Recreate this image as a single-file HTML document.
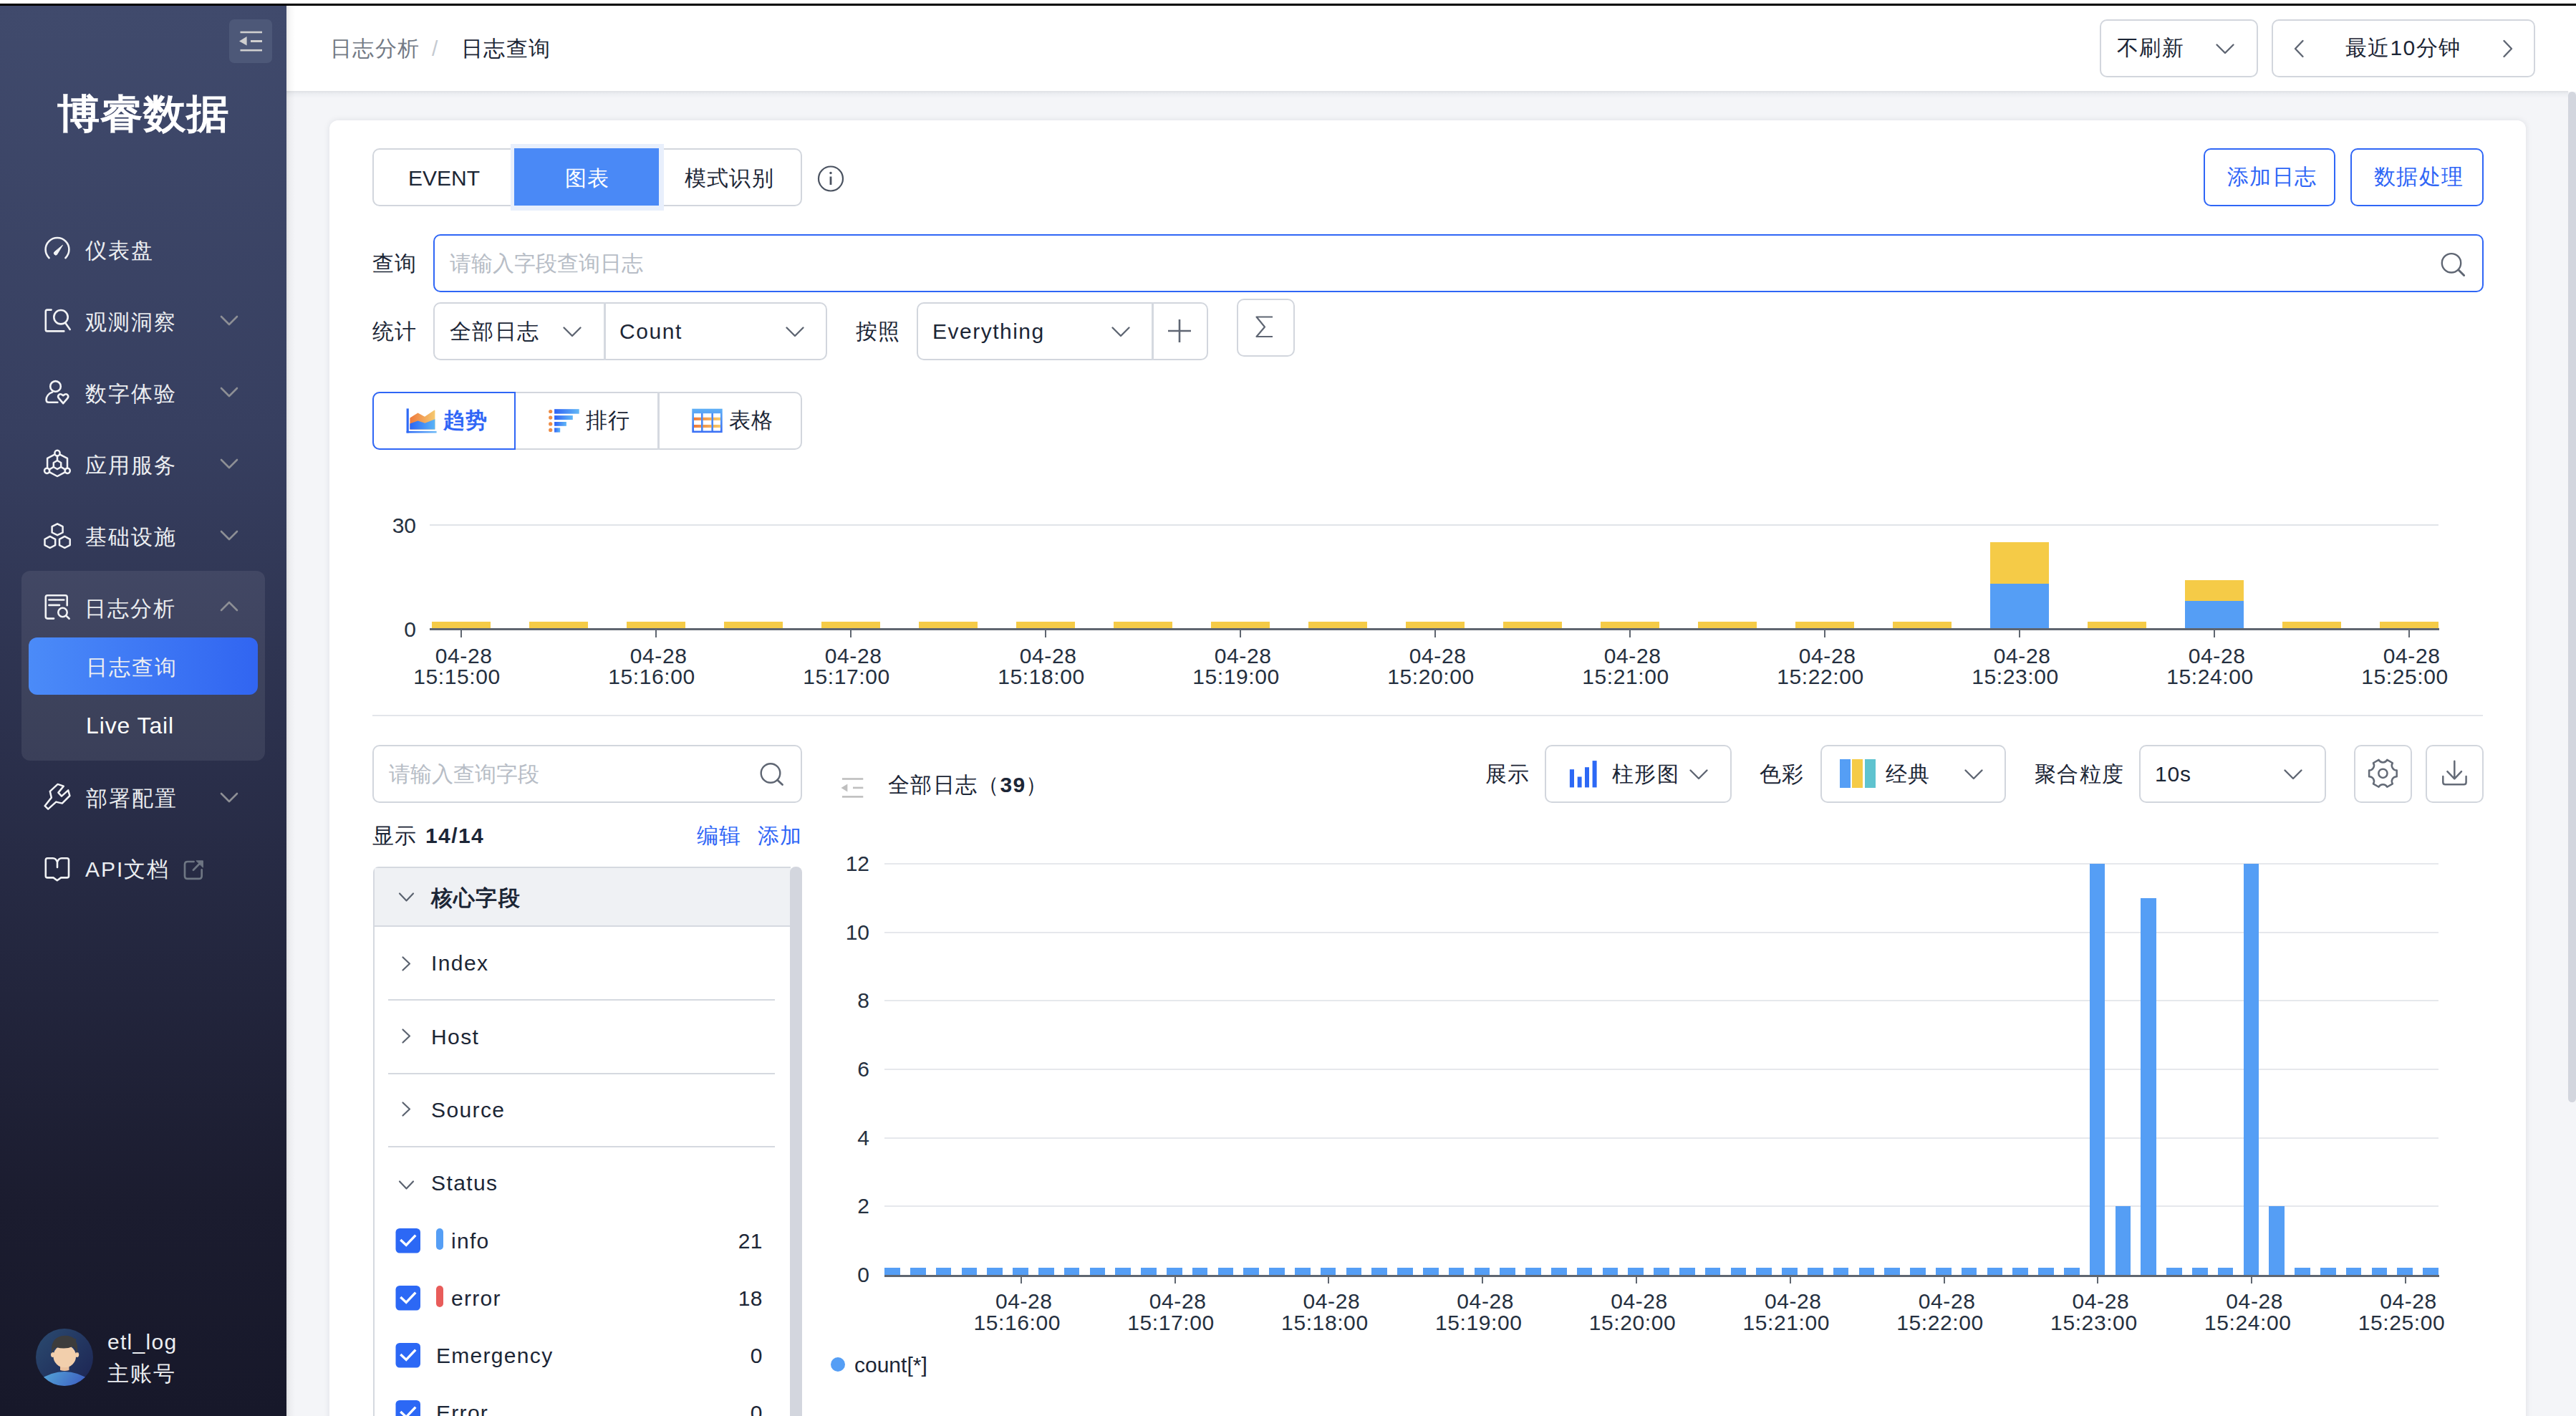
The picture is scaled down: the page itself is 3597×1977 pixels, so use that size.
<!DOCTYPE html>
<html><head><meta charset="utf-8">
<style>
*{box-sizing:border-box;margin:0;padding:0}
html,body{width:3597px;height:1977px;overflow:hidden;background:#f4f5f8;font-family:"Liberation Sans",sans-serif;color:#1c2636}
.a{position:absolute}
.t{position:absolute;white-space:nowrap;line-height:1}
#topw{left:0;top:0;width:3597px;height:5px;background:#fff}
#topb{left:0;top:5px;width:3597px;height:3px;background:#000}
#side{left:0;top:8px;width:400px;height:1969px;background:linear-gradient(180deg,#404a6c 0%,#373f60 30%,#272b45 60%,#1b1c2f 85%,#17182a 100%)}
.mi{color:#eceef1;font-size:30px;letter-spacing:2px}
.chev{position:absolute;width:16px;height:16px;border-right:2.5px solid #8a8f9a;border-bottom:2.5px solid #8a8f9a;transform:rotate(45deg)}
#hdr{left:400px;top:8px;width:3197px;height:120px;background:#fff}
#hshadow{left:400px;top:127px;width:3186px;height:10px;background:linear-gradient(180deg,#dfe1e5,#eceef2 40%,#f4f5f8)}
#lshadow{left:400px;top:8px;width:12px;height:1969px;background:linear-gradient(90deg,rgba(0,0,0,0.09),rgba(0,0,0,0.03) 40%,rgba(0,0,0,0))}
#sb{left:3586px;top:128px;width:11px;height:1411px;background:#d3d6de;border-radius:6px 6px 6px 6px}
#card{left:460px;top:168px;width:3067px;height:1900px;background:#fff;border-radius:12px;box-shadow:0 0 9px rgba(30,40,60,0.10)}
.box{position:absolute;border:2px solid #d2d6dd;border-radius:10px;background:#fff}
.dch{position:absolute;width:15px;height:15px;border-right:2.5px solid #4a5260;border-bottom:2.5px solid #4a5260;transform:rotate(45deg)}
.ax{font-size:30px;color:#253040;text-align:center;line-height:30.5px;position:absolute;white-space:nowrap;letter-spacing:0.6px}
.ax span{display:block}
</style></head><body>
<div id="topw" class="a"></div>
<div id="topb" class="a"></div>

<!-- SIDEBAR -->
<div id="side" class="a"></div>
<div class="a" style="left:320px;top:27px;width:60px;height:61px;background:#4d5878;border-radius:7px"></div>
<svg class="a" style="left:330px;top:38px" width="42" height="40" viewBox="0 0 42 40">
<rect x="5.5" y="5.7" width="30.5" height="2.6" fill="#cfcfcf"/>
<rect x="20" y="18" width="16" height="3" fill="#cfcfcf"/>
<rect x="5.5" y="30.9" width="30.5" height="2.6" fill="#cfcfcf"/>
<path d="M4 19.5 L14.6 13 L14.6 25.5 Z" fill="#cfcfcf"/>
</svg>
<div class="t" style="left:80px;top:131px;font-size:60px;font-weight:bold;color:#fff;transform:scaleY(0.94);transform-origin:0 0">博睿数据</div>


<!-- menu group bg -->
<div class="a" style="left:30px;top:797px;width:340px;height:265px;background:rgba(255,255,255,0.08);border-radius:12px"></div>
<div class="a" style="left:40px;top:890px;width:320px;height:80px;background:linear-gradient(90deg,#4b8bf8,#3165f1);border-radius:12px"></div>

<svg class="a" style="left:55px;top:320px" width="50" height="50" viewBox="0 0 50 50" fill="none" stroke="#f2f3f5" stroke-width="2.6" stroke-linecap="round">
<path d="M13.6 40.2 A16.4 16.4 0 1 1 36.4 40.2"/>
<path d="M32.3 22.6 L24.4 35.6 A2.6 2.6 0 0 1 20.6 32.3 Z" fill="#f2f3f5" stroke-width="1"/>
</svg>
<svg class="a" style="left:55px;top:425px" width="50" height="50" viewBox="0 0 50 50" fill="none" stroke="#f2f3f5" stroke-width="2.6" stroke-linecap="round" stroke-linejoin="round">
<path d="M16.6 7.6 H11 Q8.8 7.6 8.8 9.8 V35.2 Q8.8 37.4 11 37.4 H34.3"/>
<circle cx="30" cy="17.7" r="9.7"/>
<path d="M36.4 26.1 L42.7 35"/>
</svg>
<svg class="a" style="left:55px;top:523px" width="50" height="50" viewBox="0 0 50 50" fill="none" stroke="#f2f3f5" stroke-width="2.6" stroke-linecap="round" stroke-linejoin="round">
<circle cx="22.5" cy="16.4" r="7.3"/>
<path d="M18 24.6 C12.5 26.5 9.6 31 9.6 35.2 Q9.6 38.8 13 38.8 H25.4"/>
<path d="M33.2 40.2 L27.2 33.2 Q25.4 31 26.6 28.9 Q28.3 26.5 30.9 27.6 L33.2 29.2 L35.5 27.6 Q38.1 26.5 39.8 28.9 Q41 31 39.2 33.2 Z"/>
</svg>
<svg class="a" style="left:55px;top:622px" width="50" height="50" viewBox="0 0 50 50" fill="none" stroke="#f2f3f5" stroke-width="2.5" stroke-linecap="round" stroke-linejoin="round">
<ellipse cx="25" cy="10.6" rx="3.6" ry="3.9"/>
<ellipse cx="10.6" cy="35.3" rx="3.6" ry="3.6"/>
<ellipse cx="39.2" cy="35.3" rx="3.6" ry="3.6"/>
<path d="M21.2 12.6 L11.1 17.9 V31.6"/>
<path d="M28.8 12.6 L39 17.9 V31.6"/>
<path d="M14 37.2 L25 43 L36 37.2"/>
<path d="M25 21 L30.2 24 V30 L25 33 L19.8 30 V24 Z"/>
<path d="M25 14.5 V21"/>
<path d="M19.8 30 L13.6 33.6"/>
<path d="M30.2 30 L36.3 33.6"/>
</svg>
<svg class="a" style="left:55px;top:723px" width="50" height="50" viewBox="0 0 50 50" fill="none" stroke="#f2f3f5" stroke-width="2.5" stroke-linejoin="round">
<path d="M25.1 8.3 L32.6 12.2 V20.5 L25.1 24.2 L17.6 20.5 V12.2 Z"/>
<path d="M14.8 25.9 L22.2 29.8 V38.1 L14.8 42 L7.5 38.1 V29.8 Z"/>
<path d="M35.3 25.9 L42.7 29.8 V38.1 L35.3 42 L28 38.1 V29.8 Z"/>
</svg>
<svg class="a" style="left:55px;top:823px" width="50" height="50" viewBox="0 0 50 50" fill="none" stroke="#f2f3f5" stroke-width="2.6" stroke-linecap="round" stroke-linejoin="round">
<path d="M20.1 40.6 H11.3 Q8.8 40.6 8.8 38.1 V10.8 Q8.8 8.3 11.3 8.3 H36.2 Q38.7 8.3 38.7 10.8 V22.2"/>
<path d="M13.4 14.5 H34.3 M13.4 21.9 H28"/>
<circle cx="32.5" cy="32" r="6.2"/>
<path d="M37.3 36.6 L41.6 40.8"/>
</svg>
<svg class="a" style="left:55px;top:1088px" width="50" height="50" viewBox="0 0 50 50" fill="none" stroke="#f2f3f5" stroke-width="2.5" stroke-linecap="round" stroke-linejoin="round">
<path d="M7.6 37.2 L12.2 41.6 L23.3 31.6 L31.8 33.6 L42.4 23 L40.2 15.4 L31 23.6 L26.4 18.6 L33.8 9.6 L25.6 6.9 L14.8 16.8 L16.8 25.6 Z"/>
</svg>
<svg class="a" style="left:55px;top:1188px" width="50" height="50" viewBox="0 0 50 50" fill="none" stroke="#f2f3f5" stroke-width="2.6" stroke-linecap="round" stroke-linejoin="round">
<path d="M25 23 V15.5 Q23 10.2 19 10.2 H11.3 Q8.8 10.2 8.8 12.7 V34.9 Q8.8 37.4 11.3 37.4 H19.5 L24.8 41.2 L30.2 37.4 H38.5 Q41 37.4 41 34.9 V12.7 Q41 10.2 38.5 10.2 H31 Q27 10.2 25 15.5"/>
</svg>
<svg class="a" style="left:245px;top:1190px" width="50" height="50" viewBox="0 0 50 50" fill="none" stroke="#6e7683" stroke-width="2.7" stroke-linecap="round" stroke-linejoin="round">
<path d="M25.6 13 H17 Q13 13 13 17 V32.9 Q13 36.9 17 36.9 H32.7 Q36.7 36.9 36.7 32.9 V24.4"/>
<path d="M24.9 24.7 L33.5 16"/>
<path d="M29.4 11.8 H38.4 V20.8 Z" fill="#6e7683" stroke-width="1"/>
</svg>

<div class="t mi" style="left:119px;top:335px">仪表盘</div>
<div class="t mi" style="left:119px;top:435px">观测洞察</div>
<div class="t mi" style="left:119px;top:535px">数字体验</div>
<div class="t mi" style="left:119px;top:635px">应用服务</div>
<div class="t mi" style="left:119px;top:735px">基础设施</div>
<div class="t mi" style="left:118px;top:835px">日志分析</div>
<div class="t mi" style="left:120px;top:917px">日志查询</div>
<div class="t" style="left:120px;top:997px;font-size:32px;color:#fff;letter-spacing:0.9px">Live Tail</div>
<div class="t mi" style="left:120px;top:1100px">部署配置</div>
<div class="t mi" style="left:119px;top:1199px">API文档</div>

<svg class="a" style="left:305px;top:438px" width="30" height="20" viewBox="0 0 30 20" fill="none" stroke="#8d8f95" stroke-width="2.6" stroke-linecap="round" stroke-linejoin="round"><path d="M4 4 L15 15 L26 4"/></svg>
<svg class="a" style="left:305px;top:538px" width="30" height="20" viewBox="0 0 30 20" fill="none" stroke="#8d8f95" stroke-width="2.6" stroke-linecap="round" stroke-linejoin="round"><path d="M4 4 L15 15 L26 4"/></svg>
<svg class="a" style="left:305px;top:638px" width="30" height="20" viewBox="0 0 30 20" fill="none" stroke="#8d8f95" stroke-width="2.6" stroke-linecap="round" stroke-linejoin="round"><path d="M4 4 L15 15 L26 4"/></svg>
<svg class="a" style="left:305px;top:738px" width="30" height="20" viewBox="0 0 30 20" fill="none" stroke="#8d8f95" stroke-width="2.6" stroke-linecap="round" stroke-linejoin="round"><path d="M4 4 L15 15 L26 4"/></svg>
<svg class="a" style="left:305px;top:837px" width="30" height="20" viewBox="0 0 30 20" fill="none" stroke="#8d8f95" stroke-width="2.6" stroke-linecap="round" stroke-linejoin="round"><path d="M4 15 L15 4 L26 15"/></svg>
<svg class="a" style="left:305px;top:1104px" width="30" height="20" viewBox="0 0 30 20" fill="none" stroke="#8d8f95" stroke-width="2.6" stroke-linecap="round" stroke-linejoin="round"><path d="M4 4 L15 15 L26 4"/></svg>

<!-- avatar -->
<svg class="a" style="left:50px;top:1855px" width="80" height="80" viewBox="0 0 80 80">
<defs><linearGradient id="avbg" x1="0" y1="0" x2="1" y2="1"><stop offset="0" stop-color="#2b4b70"/><stop offset="1" stop-color="#1c2352"/></linearGradient>
<linearGradient id="shirt" x1="0" y1="0" x2="1" y2="0.3"><stop offset="0" stop-color="#56acd9"/><stop offset="1" stop-color="#3c5cc0"/></linearGradient>
<clipPath id="avc"><circle cx="40" cy="40" r="40"/></clipPath></defs>
<circle cx="40" cy="40" r="40" fill="url(#avbg)"/>
<g clip-path="url(#avc)">
<path d="M4 72 Q40 48 76 72 L76 90 L4 90 Z" fill="url(#shirt)"/>
<path d="M34 49 H46.5 V58 Q40 60 34 58 Z" fill="#ecc29f"/>
<ellipse cx="40.3" cy="38.5" rx="15.8" ry="15.8" fill="#f2cfac"/>
<ellipse cx="23.6" cy="36.5" rx="2.6" ry="3.4" fill="#f2cfac"/>
<ellipse cx="57.6" cy="36.5" rx="2.6" ry="3.4" fill="#f2cfac"/>
<path d="M22.4 35 Q19.5 14 36 10.2 Q48 8.5 54.5 14.5 L56.2 13.5 L56 18 Q59.5 24 57.6 35 Q56 27 51.5 25 Q41 29.5 28.5 26 Q24 29 22.4 35 Z" fill="#3c3c3c"/>
</g></svg>
<div class="t" style="left:150px;top:1859px;font-size:30px;color:#eceef1;letter-spacing:1.3px">etl_log</div>
<div class="t" style="left:150px;top:1903px;font-size:30px;color:#eceef1;letter-spacing:2px">主账号</div>


<!-- HEADER -->
<div id="hdr" class="a"></div>
<div id="hshadow" class="a"></div>
<div id="lshadow" class="a"></div>
<div id="sb" class="a"></div>
<div class="t" style="left:461px;top:53px;font-size:30px;color:#737a85;letter-spacing:1.3px">日志分析</div>
<div class="t" style="left:603px;top:53px;font-size:30px;color:#c5cad1">/</div>
<div class="t" style="left:644px;top:53px;font-size:30px;color:#1c2636;letter-spacing:1.3px">日志查询</div>
<div class="box" style="left:2932px;top:27px;width:221px;height:81px"></div>
<div class="t" style="left:2956px;top:52px;font-size:30px;letter-spacing:1.3px">不刷新</div>
<svg class="a" style="left:3092px;top:59px" width="30" height="20" viewBox="0 0 30 20" fill="none" stroke="#5f6673" stroke-width="2.4" stroke-linecap="round" stroke-linejoin="round"><path d="M3.5 3.5 L15 15 L26.5 3.5"/></svg>
<div class="box" style="left:3172px;top:27px;width:368px;height:81px"></div>
<svg class="a" style="left:3198px;top:52px" width="26" height="32" viewBox="0 0 26 32" fill="none" stroke="#5f6673" stroke-width="2.4" stroke-linecap="round" stroke-linejoin="round"><path d="M17.5 5 L7 16 L17.5 27"/></svg>
<div class="t" style="left:3275px;top:52px;font-size:30px;letter-spacing:1.3px">最近10分钟</div>
<svg class="a" style="left:3488px;top:52px" width="26" height="32" viewBox="0 0 26 32" fill="none" stroke="#5f6673" stroke-width="2.4" stroke-linecap="round" stroke-linejoin="round"><path d="M8.5 5 L19 16 L8.5 27"/></svg>

<!-- CARD -->
<div id="card" class="a"></div>
<div class="box" style="left:520px;top:207px;width:600px;height:81px"></div>
<div class="t" style="left:570px;top:234px;font-size:30px">EVENT</div>
<div class="a" style="left:713px;top:201px;width:214px;height:93px;background:#e8effc"></div>
<div class="a" style="left:718px;top:207px;width:202px;height:80px;background:#4a89f6"></div>
<div class="t" style="left:789px;top:234px;font-size:30px;color:#fff;letter-spacing:1.3px">图表</div>
<div class="t" style="left:956px;top:234px;font-size:30px;letter-spacing:1.2px">模式识别</div>
<svg class="a" style="left:1140px;top:230px" width="40" height="40" viewBox="0 0 40 40" fill="none" stroke="#4a5260" stroke-width="2.2"><circle cx="20" cy="19.5" r="17"/><path d="M20 16.5 V28" stroke-width="2.8"/><circle cx="20" cy="11.5" r="1.7" fill="#4a5260" stroke="none"/></svg>
<div class="a" style="left:3077px;top:207px;width:184px;height:81px;border:2.5px solid #2f66f6;border-radius:10px"></div>
<div class="t" style="left:3110px;top:232px;font-size:30px;color:#2f66f6;letter-spacing:1.3px">添加日志</div>
<div class="a" style="left:3282px;top:207px;width:186px;height:81px;border:2.5px solid #2f66f6;border-radius:10px"></div>
<div class="t" style="left:3315px;top:232px;font-size:30px;color:#2f66f6;letter-spacing:1.3px">数据处理</div>

<div class="t" style="left:520px;top:353px;font-size:30px;letter-spacing:1.3px">查询</div>
<div class="a" style="left:605px;top:327px;width:2863px;height:81px;border:2.5px solid #2f66f6;border-radius:10px"></div>
<div class="t" style="left:628px;top:353px;font-size:30px;color:#b7bdc6">请输入字段查询日志</div>
<svg class="a" style="left:3400px;top:345px" width="50" height="50" viewBox="0 0 50 50" fill="none" stroke="#5f6673" stroke-width="2.4" stroke-linecap="round"><circle cx="23" cy="22.3" r="13.2"/><path d="M32.8 31.8 L40.6 39.5" stroke-width="3"/></svg>

<div class="t" style="left:520px;top:448px;font-size:30px;letter-spacing:1.3px">统计</div>
<div class="box" style="left:605px;top:422px;width:550px;height:81px"></div>
<div class="a" style="left:843px;top:422px;width:2.5px;height:81px;background:#d5d9e0"></div>
<div class="t" style="left:628px;top:448px;font-size:30px;letter-spacing:1.3px">全部日志</div>
<svg class="a" style="left:784px;top:454px" width="30" height="20" viewBox="0 0 30 20" fill="none" stroke="#5f6673" stroke-width="2.4" stroke-linecap="round" stroke-linejoin="round"><path d="M3.5 3.5 L15 15 L26.5 3.5"/></svg>
<div class="t" style="left:865px;top:448px;font-size:30px;letter-spacing:1.6px">Count</div>
<svg class="a" style="left:1095px;top:454px" width="30" height="20" viewBox="0 0 30 20" fill="none" stroke="#5f6673" stroke-width="2.4" stroke-linecap="round" stroke-linejoin="round"><path d="M3.5 3.5 L15 15 L26.5 3.5"/></svg>
<div class="t" style="left:1195px;top:448px;font-size:30px;letter-spacing:1.3px">按照</div>
<div class="box" style="left:1280px;top:422px;width:407px;height:81px"></div>
<div class="a" style="left:1608px;top:422px;width:2.5px;height:81px;background:#d5d9e0"></div>
<div class="t" style="left:1302px;top:448px;font-size:30px;letter-spacing:1.5px">Everything</div>
<svg class="a" style="left:1550px;top:454px" width="30" height="20" viewBox="0 0 30 20" fill="none" stroke="#5f6673" stroke-width="2.4" stroke-linecap="round" stroke-linejoin="round"><path d="M3.5 3.5 L15 15 L26.5 3.5"/></svg>
<svg class="a" style="left:1627px;top:442px" width="40" height="40" viewBox="0 0 40 40" fill="none" stroke="#5f6673" stroke-width="2.6"><path d="M20 4 V36 M4 20 H36"/></svg>
<div class="box" style="left:1727px;top:417px;width:81px;height:81px"></div>
<svg class="a" style="left:1747px;top:437px" width="40" height="40" viewBox="0 0 40 40" fill="none" stroke="#5f6673" stroke-width="2.2" stroke-linejoin="round"><path d="M30 5.5 H7.5 L19 19.5 L7.5 33 H30"/></svg>

<div class="box" style="left:520px;top:547px;width:600px;height:81px"></div>
<div class="a" style="left:918px;top:547px;width:2.5px;height:81px;background:#d5d9e0"></div>
<div class="a" style="left:520px;top:547px;width:200px;height:81px;border:2.5px solid #2f66f6;border-radius:10px 0 0 10px"></div>


<svg class="a" style="left:560px;top:565px" width="80" height="45" viewBox="0 0 80 45">
<defs>
<linearGradient id="tax" x1="0" y1="0" x2="1" y2="0"><stop offset="0" stop-color="#2a66f5"/><stop offset="1" stop-color="#72bdf7"/></linearGradient>
<linearGradient id="tor" x1="0" y1="0" x2="1" y2="0"><stop offset="0" stop-color="#ee7a3c"/><stop offset="1" stop-color="#f5c970"/></linearGradient>
<linearGradient id="tbl" x1="0" y1="0" x2="1" y2="0"><stop offset="0" stop-color="#2a66f5"/><stop offset="1" stop-color="#5ab4f6"/></linearGradient>
</defs>
<rect x="7.6" y="5.4" width="3.2" height="34" fill="#2f6af5"/>
<rect x="7.6" y="36.9" width="42" height="2.6" fill="url(#tax)"/>
<path d="M12.4 18.4 L17.8 14.9 L23.5 11.4 L33 16.8 L46.7 7.6 L47.4 8 V34.6 H12.4 Z" fill="url(#tor)"/>
<path d="M12.4 26.4 L23.5 22.6 L33.4 25.7 L47.4 20.3 V34.6 H12.4 Z" fill="url(#tbl)"/>
</svg>
<div class="t" style="left:619px;top:572px;font-size:30px;font-weight:bold;color:#2f66f6;letter-spacing:1.3px">趋势</div>
<svg class="a" style="left:755px;top:565px" width="80" height="45" viewBox="0 0 80 45">
<defs><linearGradient id="rb" x1="0" y1="0" x2="1" y2="0"><stop offset="0" stop-color="#2d62f5"/><stop offset="1" stop-color="#62b8f6"/></linearGradient></defs>
<g fill="#ee8c45"><circle cx="13.7" cy="9.5" r="2.6"/><circle cx="13.7" cy="18.1" r="2.6"/><circle cx="13.7" cy="26.9" r="2.6"/><circle cx="13.7" cy="35.4" r="2.6"/></g>
<rect x="19.1" y="6.2" width="34.6" height="6.5" fill="url(#rb)"/>
<rect x="19.1" y="15.1" width="25.7" height="6" fill="url(#rb)"/>
<rect x="19.1" y="24" width="16.8" height="5.8" fill="url(#rb)"/>
<rect x="19.1" y="32.4" width="8.1" height="6.2" fill="url(#rb)"/>
</svg>
<div class="t" style="left:818px;top:572px;font-size:30px;letter-spacing:1.3px">排行</div>
<svg class="a" style="left:955px;top:565px" width="80" height="45" viewBox="0 0 80 45">
<defs><linearGradient id="tbb" x1="0" y1="0" x2="0" y2="1"><stop offset="0" stop-color="#5fb0f6"/><stop offset="1" stop-color="#3a6ff5"/></linearGradient>
<linearGradient id="tbo" x1="0" y1="0" x2="1" y2="0"><stop offset="0" stop-color="#ef7a3a"/><stop offset="1" stop-color="#f7cc6a"/></linearGradient></defs>
<rect x="11.3" y="5.7" width="42.4" height="33.4" fill="url(#tbb)"/>
<rect x="14" y="12.2" width="10" height="24.3" fill="#fff"/>
<rect x="26.4" y="12.2" width="12.2" height="24.3" fill="#fff"/>
<rect x="41" y="12.2" width="10" height="24.3" fill="#fff"/>
<g fill="url(#tbo)"><rect x="14" y="17.8" width="37" height="4.1"/><rect x="14" y="28" width="37" height="4.1"/></g>
<rect x="24" y="12.2" width="2.4" height="24.3" fill="#4a8af5"/>
<rect x="38.6" y="12.2" width="2.4" height="24.3" fill="#4a8af5"/>
</svg>
<div class="t" style="left:1018px;top:572px;font-size:30px;letter-spacing:1.3px">表格</div>

<div class="t" style="left:540px;top:719px;width:41px;text-align:right;font-size:30px;color:#253040">30</div>
<div class="t" style="left:540px;top:864px;width:41px;text-align:right;font-size:30px;color:#253040">0</div>
<div class="a" style="left:600px;top:732px;width:2805px;height:2px;background:#e1e4e9"></div>
<div class="a" style="left:602.6px;top:868px;width:82px;height:10px;background:#f5cb47"></div>
<div class="a" style="left:738.6px;top:868px;width:82px;height:10px;background:#f5cb47"></div>
<div class="a" style="left:874.6px;top:868px;width:82px;height:10px;background:#f5cb47"></div>
<div class="a" style="left:1010.6px;top:868px;width:82px;height:10px;background:#f5cb47"></div>
<div class="a" style="left:1146.6px;top:868px;width:82px;height:10px;background:#f5cb47"></div>
<div class="a" style="left:1282.6px;top:868px;width:82px;height:10px;background:#f5cb47"></div>
<div class="a" style="left:1418.6px;top:868px;width:82px;height:10px;background:#f5cb47"></div>
<div class="a" style="left:1554.6px;top:868px;width:82px;height:10px;background:#f5cb47"></div>
<div class="a" style="left:1690.6px;top:868px;width:82px;height:10px;background:#f5cb47"></div>
<div class="a" style="left:1826.6px;top:868px;width:82px;height:10px;background:#f5cb47"></div>
<div class="a" style="left:1962.6px;top:868px;width:82px;height:10px;background:#f5cb47"></div>
<div class="a" style="left:2098.6px;top:868px;width:82px;height:10px;background:#f5cb47"></div>
<div class="a" style="left:2234.6px;top:868px;width:82px;height:10px;background:#f5cb47"></div>
<div class="a" style="left:2370.6px;top:868px;width:82px;height:10px;background:#f5cb47"></div>
<div class="a" style="left:2506.6px;top:868px;width:82px;height:10px;background:#f5cb47"></div>
<div class="a" style="left:2642.6px;top:868px;width:82px;height:10px;background:#f5cb47"></div>
<div class="a" style="left:2778.6px;top:757px;width:82px;height:58px;background:#f5cb47"></div>
<div class="a" style="left:2778.6px;top:815px;width:82px;height:63px;background:#559ef5"></div>
<div class="a" style="left:2914.6px;top:868px;width:82px;height:10px;background:#f5cb47"></div>
<div class="a" style="left:3050.6px;top:810px;width:82px;height:29px;background:#f5cb47"></div>
<div class="a" style="left:3050.6px;top:839px;width:82px;height:39px;background:#559ef5"></div>
<div class="a" style="left:3186.6px;top:868px;width:82px;height:10px;background:#f5cb47"></div>
<div class="a" style="left:3322.6px;top:868px;width:82px;height:10px;background:#f5cb47"></div>
<div class="a" style="left:600px;top:877px;width:2806px;height:2.5px;background:#5f6670"></div>
<div class="a" style="left:642.6px;top:879px;width:2px;height:11px;background:#5f6670"></div>
<div class="ax" style="left:563.6px;top:900.5px;width:160px;line-height:29px"><span style="margin-left:8px">04-28</span><span style="margin-left:-11px">15:15:00</span></div>
<div class="a" style="left:914.6px;top:879px;width:2px;height:11px;background:#5f6670"></div>
<div class="ax" style="left:835.6px;top:900.5px;width:160px;line-height:29px"><span style="margin-left:8px">04-28</span><span style="margin-left:-11px">15:16:00</span></div>
<div class="a" style="left:1186.6px;top:879px;width:2px;height:11px;background:#5f6670"></div>
<div class="ax" style="left:1107.6px;top:900.5px;width:160px;line-height:29px"><span style="margin-left:8px">04-28</span><span style="margin-left:-11px">15:17:00</span></div>
<div class="a" style="left:1458.6px;top:879px;width:2px;height:11px;background:#5f6670"></div>
<div class="ax" style="left:1379.6px;top:900.5px;width:160px;line-height:29px"><span style="margin-left:8px">04-28</span><span style="margin-left:-11px">15:18:00</span></div>
<div class="a" style="left:1730.6px;top:879px;width:2px;height:11px;background:#5f6670"></div>
<div class="ax" style="left:1651.6px;top:900.5px;width:160px;line-height:29px"><span style="margin-left:8px">04-28</span><span style="margin-left:-11px">15:19:00</span></div>
<div class="a" style="left:2002.6px;top:879px;width:2px;height:11px;background:#5f6670"></div>
<div class="ax" style="left:1923.6px;top:900.5px;width:160px;line-height:29px"><span style="margin-left:8px">04-28</span><span style="margin-left:-11px">15:20:00</span></div>
<div class="a" style="left:2274.6px;top:879px;width:2px;height:11px;background:#5f6670"></div>
<div class="ax" style="left:2195.6px;top:900.5px;width:160px;line-height:29px"><span style="margin-left:8px">04-28</span><span style="margin-left:-11px">15:21:00</span></div>
<div class="a" style="left:2546.6px;top:879px;width:2px;height:11px;background:#5f6670"></div>
<div class="ax" style="left:2467.6px;top:900.5px;width:160px;line-height:29px"><span style="margin-left:8px">04-28</span><span style="margin-left:-11px">15:22:00</span></div>
<div class="a" style="left:2818.6px;top:879px;width:2px;height:11px;background:#5f6670"></div>
<div class="ax" style="left:2739.6px;top:900.5px;width:160px;line-height:29px"><span style="margin-left:8px">04-28</span><span style="margin-left:-11px">15:23:00</span></div>
<div class="a" style="left:3090.6px;top:879px;width:2px;height:11px;background:#5f6670"></div>
<div class="ax" style="left:3011.6px;top:900.5px;width:160px;line-height:29px"><span style="margin-left:8px">04-28</span><span style="margin-left:-11px">15:24:00</span></div>
<div class="a" style="left:3362.6px;top:879px;width:2px;height:11px;background:#5f6670"></div>
<div class="ax" style="left:3283.6px;top:900.5px;width:160px;line-height:29px"><span style="margin-left:8px">04-28</span><span style="margin-left:-11px">15:25:00</span></div>
<div class="a" style="left:520px;top:998px;width:2947px;height:2px;background:#e3e6ea"></div>
<div class="t" style="left:1150px;top:1191.0px;width:64px;text-align:right;font-size:30px;color:#253040">12</div>
<div class="a" style="left:1235px;top:1205.0px;width:2170px;height:2px;background:#e6e8ec"></div>
<div class="t" style="left:1150px;top:1286.7px;width:64px;text-align:right;font-size:30px;color:#253040">10</div>
<div class="a" style="left:1235px;top:1300.7px;width:2170px;height:2px;background:#e6e8ec"></div>
<div class="t" style="left:1150px;top:1382.3px;width:64px;text-align:right;font-size:30px;color:#253040">8</div>
<div class="a" style="left:1235px;top:1396.3px;width:2170px;height:2px;background:#e6e8ec"></div>
<div class="t" style="left:1150px;top:1478.0px;width:64px;text-align:right;font-size:30px;color:#253040">6</div>
<div class="a" style="left:1235px;top:1492.0px;width:2170px;height:2px;background:#e6e8ec"></div>
<div class="t" style="left:1150px;top:1573.7px;width:64px;text-align:right;font-size:30px;color:#253040">4</div>
<div class="a" style="left:1235px;top:1587.7px;width:2170px;height:2px;background:#e6e8ec"></div>
<div class="t" style="left:1150px;top:1669.3px;width:64px;text-align:right;font-size:30px;color:#253040">2</div>
<div class="a" style="left:1235px;top:1683.3px;width:2170px;height:2px;background:#e6e8ec"></div>
<div class="t" style="left:1150px;top:1765.0px;width:64px;text-align:right;font-size:30px;color:#253040">0</div>
<div class="a" style="left:1235.2px;top:1770.0px;width:21.6px;height:10.0px;background:#559ef5"></div>
<div class="a" style="left:1271.0px;top:1770.0px;width:21.6px;height:10.0px;background:#559ef5"></div>
<div class="a" style="left:1306.8px;top:1770.0px;width:21.6px;height:10.0px;background:#559ef5"></div>
<div class="a" style="left:1342.6px;top:1770.0px;width:21.6px;height:10.0px;background:#559ef5"></div>
<div class="a" style="left:1378.4px;top:1770.0px;width:21.6px;height:10.0px;background:#559ef5"></div>
<div class="a" style="left:1414.2px;top:1770.0px;width:21.6px;height:10.0px;background:#559ef5"></div>
<div class="a" style="left:1450.0px;top:1770.0px;width:21.6px;height:10.0px;background:#559ef5"></div>
<div class="a" style="left:1485.8px;top:1770.0px;width:21.6px;height:10.0px;background:#559ef5"></div>
<div class="a" style="left:1521.6px;top:1770.0px;width:21.6px;height:10.0px;background:#559ef5"></div>
<div class="a" style="left:1557.4px;top:1770.0px;width:21.6px;height:10.0px;background:#559ef5"></div>
<div class="a" style="left:1593.2px;top:1770.0px;width:21.6px;height:10.0px;background:#559ef5"></div>
<div class="a" style="left:1629.0px;top:1770.0px;width:21.6px;height:10.0px;background:#559ef5"></div>
<div class="a" style="left:1664.8px;top:1770.0px;width:21.6px;height:10.0px;background:#559ef5"></div>
<div class="a" style="left:1700.6px;top:1770.0px;width:21.6px;height:10.0px;background:#559ef5"></div>
<div class="a" style="left:1736.4px;top:1770.0px;width:21.6px;height:10.0px;background:#559ef5"></div>
<div class="a" style="left:1772.2px;top:1770.0px;width:21.6px;height:10.0px;background:#559ef5"></div>
<div class="a" style="left:1808.0px;top:1770.0px;width:21.6px;height:10.0px;background:#559ef5"></div>
<div class="a" style="left:1843.8px;top:1770.0px;width:21.6px;height:10.0px;background:#559ef5"></div>
<div class="a" style="left:1879.6px;top:1770.0px;width:21.6px;height:10.0px;background:#559ef5"></div>
<div class="a" style="left:1915.4px;top:1770.0px;width:21.6px;height:10.0px;background:#559ef5"></div>
<div class="a" style="left:1951.2px;top:1770.0px;width:21.6px;height:10.0px;background:#559ef5"></div>
<div class="a" style="left:1987.0px;top:1770.0px;width:21.6px;height:10.0px;background:#559ef5"></div>
<div class="a" style="left:2022.8px;top:1770.0px;width:21.6px;height:10.0px;background:#559ef5"></div>
<div class="a" style="left:2058.6px;top:1770.0px;width:21.6px;height:10.0px;background:#559ef5"></div>
<div class="a" style="left:2094.4px;top:1770.0px;width:21.6px;height:10.0px;background:#559ef5"></div>
<div class="a" style="left:2130.2px;top:1770.0px;width:21.6px;height:10.0px;background:#559ef5"></div>
<div class="a" style="left:2166.0px;top:1770.0px;width:21.6px;height:10.0px;background:#559ef5"></div>
<div class="a" style="left:2201.8px;top:1770.0px;width:21.6px;height:10.0px;background:#559ef5"></div>
<div class="a" style="left:2237.6px;top:1770.0px;width:21.6px;height:10.0px;background:#559ef5"></div>
<div class="a" style="left:2273.4px;top:1770.0px;width:21.6px;height:10.0px;background:#559ef5"></div>
<div class="a" style="left:2309.2px;top:1770.0px;width:21.6px;height:10.0px;background:#559ef5"></div>
<div class="a" style="left:2345.0px;top:1770.0px;width:21.6px;height:10.0px;background:#559ef5"></div>
<div class="a" style="left:2380.8px;top:1770.0px;width:21.6px;height:10.0px;background:#559ef5"></div>
<div class="a" style="left:2416.6px;top:1770.0px;width:21.6px;height:10.0px;background:#559ef5"></div>
<div class="a" style="left:2452.4px;top:1770.0px;width:21.6px;height:10.0px;background:#559ef5"></div>
<div class="a" style="left:2488.2px;top:1770.0px;width:21.6px;height:10.0px;background:#559ef5"></div>
<div class="a" style="left:2524.0px;top:1770.0px;width:21.6px;height:10.0px;background:#559ef5"></div>
<div class="a" style="left:2559.8px;top:1770.0px;width:21.6px;height:10.0px;background:#559ef5"></div>
<div class="a" style="left:2595.6px;top:1770.0px;width:21.6px;height:10.0px;background:#559ef5"></div>
<div class="a" style="left:2631.4px;top:1770.0px;width:21.6px;height:10.0px;background:#559ef5"></div>
<div class="a" style="left:2667.2px;top:1770.0px;width:21.6px;height:10.0px;background:#559ef5"></div>
<div class="a" style="left:2703.0px;top:1770.0px;width:21.6px;height:10.0px;background:#559ef5"></div>
<div class="a" style="left:2738.8px;top:1770.0px;width:21.6px;height:10.0px;background:#559ef5"></div>
<div class="a" style="left:2774.6px;top:1770.0px;width:21.6px;height:10.0px;background:#559ef5"></div>
<div class="a" style="left:2810.4px;top:1770.0px;width:21.6px;height:10.0px;background:#559ef5"></div>
<div class="a" style="left:2846.2px;top:1770.0px;width:21.6px;height:10.0px;background:#559ef5"></div>
<div class="a" style="left:2882.0px;top:1770.0px;width:21.6px;height:10.0px;background:#559ef5"></div>
<div class="a" style="left:2917.8px;top:1206.0px;width:21.6px;height:574.0px;background:#559ef5"></div>
<div class="a" style="left:2953.6px;top:1684.3px;width:21.6px;height:95.7px;background:#559ef5"></div>
<div class="a" style="left:2989.4px;top:1253.9px;width:21.6px;height:526.1px;background:#559ef5"></div>
<div class="a" style="left:3025.2px;top:1770.0px;width:21.6px;height:10.0px;background:#559ef5"></div>
<div class="a" style="left:3061.0px;top:1770.0px;width:21.6px;height:10.0px;background:#559ef5"></div>
<div class="a" style="left:3096.8px;top:1770.0px;width:21.6px;height:10.0px;background:#559ef5"></div>
<div class="a" style="left:3132.6px;top:1206.0px;width:21.6px;height:574.0px;background:#559ef5"></div>
<div class="a" style="left:3168.4px;top:1684.3px;width:21.6px;height:95.7px;background:#559ef5"></div>
<div class="a" style="left:3204.2px;top:1770.0px;width:21.6px;height:10.0px;background:#559ef5"></div>
<div class="a" style="left:3240.0px;top:1770.0px;width:21.6px;height:10.0px;background:#559ef5"></div>
<div class="a" style="left:3275.8px;top:1770.0px;width:21.6px;height:10.0px;background:#559ef5"></div>
<div class="a" style="left:3311.6px;top:1770.0px;width:21.6px;height:10.0px;background:#559ef5"></div>
<div class="a" style="left:3347.4px;top:1770.0px;width:21.6px;height:10.0px;background:#559ef5"></div>
<div class="a" style="left:3383.2px;top:1770.0px;width:21.6px;height:10.0px;background:#559ef5"></div>
<div class="a" style="left:1235px;top:1780px;width:2171px;height:2.5px;background:#5f6670"></div>
<div class="a" style="left:1424.8px;top:1782px;width:2px;height:10px;background:#5f6670"></div>
<div class="ax" style="left:1345.8px;top:1801.5px;width:160px"><span style="margin-left:8px">04-28</span><span style="margin-left:-11px">15:16:00</span></div>
<div class="a" style="left:1639.6px;top:1782px;width:2px;height:10px;background:#5f6670"></div>
<div class="ax" style="left:1560.6px;top:1801.5px;width:160px"><span style="margin-left:8px">04-28</span><span style="margin-left:-11px">15:17:00</span></div>
<div class="a" style="left:1854.4px;top:1782px;width:2px;height:10px;background:#5f6670"></div>
<div class="ax" style="left:1775.4px;top:1801.5px;width:160px"><span style="margin-left:8px">04-28</span><span style="margin-left:-11px">15:18:00</span></div>
<div class="a" style="left:2069.2px;top:1782px;width:2px;height:10px;background:#5f6670"></div>
<div class="ax" style="left:1990.2px;top:1801.5px;width:160px"><span style="margin-left:8px">04-28</span><span style="margin-left:-11px">15:19:00</span></div>
<div class="a" style="left:2284.0px;top:1782px;width:2px;height:10px;background:#5f6670"></div>
<div class="ax" style="left:2205.0px;top:1801.5px;width:160px"><span style="margin-left:8px">04-28</span><span style="margin-left:-11px">15:20:00</span></div>
<div class="a" style="left:2498.8px;top:1782px;width:2px;height:10px;background:#5f6670"></div>
<div class="ax" style="left:2419.8px;top:1801.5px;width:160px"><span style="margin-left:8px">04-28</span><span style="margin-left:-11px">15:21:00</span></div>
<div class="a" style="left:2713.6px;top:1782px;width:2px;height:10px;background:#5f6670"></div>
<div class="ax" style="left:2634.6px;top:1801.5px;width:160px"><span style="margin-left:8px">04-28</span><span style="margin-left:-11px">15:22:00</span></div>
<div class="a" style="left:2928.4px;top:1782px;width:2px;height:10px;background:#5f6670"></div>
<div class="ax" style="left:2849.4px;top:1801.5px;width:160px"><span style="margin-left:8px">04-28</span><span style="margin-left:-11px">15:23:00</span></div>
<div class="a" style="left:3143.2px;top:1782px;width:2px;height:10px;background:#5f6670"></div>
<div class="ax" style="left:3064.2px;top:1801.5px;width:160px"><span style="margin-left:8px">04-28</span><span style="margin-left:-11px">15:24:00</span></div>
<div class="a" style="left:3358.0px;top:1782px;width:2px;height:10px;background:#5f6670"></div>
<div class="ax" style="left:3279.0px;top:1801.5px;width:160px"><span style="margin-left:8px">04-28</span><span style="margin-left:-11px">15:25:00</span></div>
<div class="a" style="left:1160px;top:1895px;width:20px;height:20px;border-radius:50%;background:#559ef5"></div>
<div class="t" style="left:1193px;top:1891px;font-size:30px;color:#1c2636">count[*]</div>

<!-- FIELD PANEL -->
<div class="box" style="left:520px;top:1040px;width:600px;height:81px"></div>
<div class="t" style="left:543px;top:1066px;font-size:30px;color:#b7bdc6">请输入查询字段</div>
<svg class="a" style="left:1055px;top:1058px" width="45" height="45" viewBox="0 0 45 45" fill="none" stroke="#5f6673" stroke-width="2.4" stroke-linecap="round"><circle cx="21" cy="21.5" r="13.3"/><path d="M30.5 31 L37.5 37.5" stroke-width="2.8"/></svg>
<div class="t" style="left:520px;top:1152px;font-size:30px;letter-spacing:1.3px">显示</div><div class="t" style="left:594px;top:1152px;font-size:30px;font-weight:bold;letter-spacing:1.4px">14/14</div>
<div class="t" style="left:973px;top:1152px;font-size:30px;color:#2f66f6;letter-spacing:1.3px">编辑</div>
<div class="t" style="left:1058px;top:1152px;font-size:30px;color:#2f66f6;letter-spacing:1.3px">添加</div>
<div class="a" style="left:521px;top:1210px;width:583px;height:800px;border:2px solid #d5d9e0;border-radius:8px 0 0 0;border-right:none"></div>
<div class="a" style="left:523px;top:1212px;width:581px;height:82px;background:#eff1f4;border-bottom:2px solid #d5d9e0"></div>
<div class="a" style="left:1103px;top:1210px;width:17px;height:800px;background:#d3d6de;border-radius:8px 8px 0 0"></div>
<svg class="a" style="left:555px;top:1244px" width="25" height="17" viewBox="0 0 25 17" fill="none" stroke="#5b6370" stroke-width="2.2" stroke-linecap="round" stroke-linejoin="round"><path d="M3 3.5 L12.5 13.5 L22 3.5"/></svg>
<div class="t" style="left:602px;top:1239px;font-size:30px;font-weight:bold;letter-spacing:1.2px">核心字段</div>
<svg class="a" style="left:555px;top:1333px" width="25" height="25" viewBox="0 0 25 25" fill="none" stroke="#5b6370" stroke-width="2.2" stroke-linecap="round" stroke-linejoin="round"><path d="M7.5 3.5 L17 12.5 L7.5 21.5"/></svg>
<div class="t" style="left:602px;top:1330px;font-size:30px;letter-spacing:1.4px">Index</div>
<div class="a" style="left:542px;top:1395px;width:540px;height:2px;background:#d5d9e0"></div>
<svg class="a" style="left:555px;top:1434px" width="25" height="25" viewBox="0 0 25 25" fill="none" stroke="#5b6370" stroke-width="2.2" stroke-linecap="round" stroke-linejoin="round"><path d="M7.5 3.5 L17 12.5 L7.5 21.5"/></svg>
<div class="t" style="left:602px;top:1433px;font-size:30px;letter-spacing:1.4px">Host</div>
<div class="a" style="left:542px;top:1498px;width:540px;height:2px;background:#d5d9e0"></div>
<svg class="a" style="left:555px;top:1536px" width="25" height="25" viewBox="0 0 25 25" fill="none" stroke="#5b6370" stroke-width="2.2" stroke-linecap="round" stroke-linejoin="round"><path d="M7.5 3.5 L17 12.5 L7.5 21.5"/></svg>
<div class="t" style="left:602px;top:1535px;font-size:30px;letter-spacing:1.4px">Source</div>
<div class="a" style="left:542px;top:1600px;width:540px;height:2px;background:#d5d9e0"></div>
<svg class="a" style="left:555px;top:1646px" width="25" height="17" viewBox="0 0 25 17" fill="none" stroke="#5b6370" stroke-width="2.2" stroke-linecap="round" stroke-linejoin="round"><path d="M3 3.5 L12.5 13.5 L22 3.5"/></svg>
<div class="t" style="left:602px;top:1637px;font-size:30px;letter-spacing:1.4px">Status</div>
<svg class="a" style="left:552px;top:1715px" width="36" height="36" viewBox="0 0 36 36"><rect x="0.5" y="0" width="34.5" height="34.6" rx="5.5" fill="#2c68f5"/><path d="M7.3 16 L15.2 23.4 L28.3 9.6" fill="none" stroke="#fff" stroke-width="3.4"/></svg>
<div class="a" style="left:609px;top:1715px;width:10px;height:30px;border-radius:5px;background:#559ef5"></div>
<div class="t" style="left:630px;top:1718px;font-size:30px;letter-spacing:1.3px">info</div>
<div class="t" style="left:1000px;top:1718px;width:65px;text-align:right;font-size:30px;letter-spacing:0.5px">21</div>
<svg class="a" style="left:552px;top:1795px" width="36" height="36" viewBox="0 0 36 36"><rect x="0.5" y="0" width="34.5" height="34.6" rx="5.5" fill="#2c68f5"/><path d="M7.3 16 L15.2 23.4 L28.3 9.6" fill="none" stroke="#fff" stroke-width="3.4"/></svg>
<div class="a" style="left:609px;top:1795px;width:10px;height:30px;border-radius:5px;background:#e85c5a"></div>
<div class="t" style="left:630px;top:1798px;font-size:30px;letter-spacing:1.3px">error</div>
<div class="t" style="left:1000px;top:1798px;width:65px;text-align:right;font-size:30px;letter-spacing:0.5px">18</div>
<svg class="a" style="left:552px;top:1875px" width="36" height="36" viewBox="0 0 36 36"><rect x="0.5" y="0" width="34.5" height="34.6" rx="5.5" fill="#2c68f5"/><path d="M7.3 16 L15.2 23.4 L28.3 9.6" fill="none" stroke="#fff" stroke-width="3.4"/></svg>
<div class="t" style="left:609px;top:1878px;font-size:30px;letter-spacing:1.3px">Emergency</div>
<div class="t" style="left:1000px;top:1878px;width:65px;text-align:right;font-size:30px;letter-spacing:0.5px">0</div>
<svg class="a" style="left:552px;top:1955px" width="36" height="36" viewBox="0 0 36 36"><rect x="0.5" y="0" width="34.5" height="34.6" rx="5.5" fill="#2c68f5"/><path d="M7.3 16 L15.2 23.4 L28.3 9.6" fill="none" stroke="#fff" stroke-width="3.4"/></svg>
<div class="t" style="left:609px;top:1958px;font-size:30px;letter-spacing:1.3px">Error</div>
<div class="t" style="left:1000px;top:1958px;width:65px;text-align:right;font-size:30px;letter-spacing:0.5px">0</div>

<!-- CHART TOOLBAR -->
<svg class="a" style="left:1165px;top:1075px" width="50" height="50" viewBox="0 0 50 50"><g fill="#bfbfbf"><rect x="10.9" y="11.2" width="29.4" height="2.6"/><rect x="26" y="23.6" width="14.3" height="2.6"/><rect x="10.9" y="36.1" width="29.4" height="2.6"/><path d="M9.5 25.1 L18.4 19.4 V30.4 Z"/></g></svg>
<div class="t" style="left:1240px;top:1081px;font-size:30px;letter-spacing:1.3px">全部日志（<b>39</b>）</div>
<div class="t" style="left:2074px;top:1066px;font-size:30px;letter-spacing:1.3px">展示</div>
<div class="box" style="left:2157px;top:1040px;width:261px;height:81px"></div>
<svg class="a" style="left:2180px;top:1050px" width="60" height="60" viewBox="0 0 60 60" fill="#2c68f5"><rect x="11.9" y="24.2" width="6.1" height="25.2"/><rect x="22.7" y="34.5" width="5.9" height="14.9"/><rect x="33" y="21.2" width="6" height="28.2"/><rect x="43.6" y="12.1" width="6" height="37.3"/></svg>
<div class="t" style="left:2251px;top:1066px;font-size:30px;letter-spacing:1.3px">柱形图</div>
<svg class="a" style="left:2357px;top:1072px" width="30" height="20" viewBox="0 0 30 20" fill="none" stroke="#5f6673" stroke-width="2.4" stroke-linecap="round" stroke-linejoin="round"><path d="M3.5 3.5 L15 15 L26.5 3.5"/></svg>
<div class="t" style="left:2457px;top:1066px;font-size:30px;letter-spacing:1.3px">色彩</div>
<div class="box" style="left:2542px;top:1040px;width:259px;height:81px"></div>
<div class="a" style="left:2568.5px;top:1060px;width:15px;height:40px;background:#559ef5"></div>
<div class="a" style="left:2586px;top:1060px;width:15px;height:40px;background:#f5cb47"></div>
<div class="a" style="left:2603.8px;top:1060px;width:15px;height:40px;background:#5fc3cf"></div>
<div class="t" style="left:2633px;top:1066px;font-size:30px;letter-spacing:1.3px">经典</div>
<svg class="a" style="left:2741px;top:1072px" width="30" height="20" viewBox="0 0 30 20" fill="none" stroke="#5f6673" stroke-width="2.4" stroke-linecap="round" stroke-linejoin="round"><path d="M3.5 3.5 L15 15 L26.5 3.5"/></svg>
<div class="t" style="left:2841px;top:1066px;font-size:30px;letter-spacing:1.3px">聚合粒度</div>
<div class="box" style="left:2987px;top:1040px;width:261px;height:81px"></div>
<div class="t" style="left:3009px;top:1066px;font-size:30px;letter-spacing:0.8px">10s</div>
<svg class="a" style="left:3187px;top:1072px" width="30" height="20" viewBox="0 0 30 20" fill="none" stroke="#5f6673" stroke-width="2.4" stroke-linecap="round" stroke-linejoin="round"><path d="M3.5 3.5 L15 15 L26.5 3.5"/></svg>
<div class="box" style="left:3287px;top:1040px;width:81px;height:81px"></div>
<div class="box" style="left:3387px;top:1040px;width:81px;height:81px"></div>
<svg class="a" style="left:3295px;top:1050px" width="165" height="60" viewBox="0 0 165 60" fill="none" stroke="#646b77" stroke-width="2.5" stroke-linecap="round" stroke-linejoin="round">
<path d="M51.70 25.40 L51.70 34.20 A6.6 6.6 0 0 0 45.86 44.31 L38.24 48.71 A6.6 6.6 0 0 0 26.56 48.71 L18.94 44.31 A6.6 6.6 0 0 0 13.10 34.20 L13.10 25.40 A6.6 6.6 0 0 0 18.94 15.29 L26.56 10.89 A6.6 6.6 0 0 0 38.24 10.89 L45.86 15.29 A6.6 6.6 0 0 0 51.70 25.40 Z"/>
<circle cx="32.4" cy="29.8" r="6.1"/>
<path d="M132.3 12.8 V37.2 M122.4 27.2 L132.3 37.4 L142 27.2"/>
<path d="M116.3 34 V42.2 Q116.3 45.2 119.3 45.2 H145.6 Q148.6 45.2 148.6 42.2 V34"/>
</svg>

</body></html>
